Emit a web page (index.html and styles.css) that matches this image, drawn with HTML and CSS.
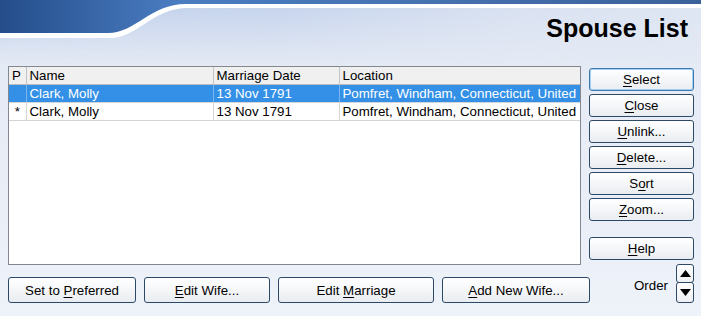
FILE: index.html
```html
<!DOCTYPE html>
<html lang="en">
<head>
  <meta charset="UTF-8">
  <title>Spouse List</title>
  <link rel="stylesheet" href="styles.css">
</head>
<body>
  <div class="dialog">
    <header class="banner">
      <svg class="banner-art" width="701" height="66" viewBox="0 0 701 66">
        <defs>
          <linearGradient id="dark" x1="0" y1="0" x2="1" y2="0">
            <stop offset="0" stop-color="#244d8a"/>
            <stop offset="0.25" stop-color="#4a7cc1"/>
            <stop offset="0.6" stop-color="#4672b0"/>
            <stop offset="1" stop-color="#3a6199"/>
          </linearGradient>
          <linearGradient id="glowV" x1="0" y1="0" x2="0" y2="1">
            <stop offset="0" stop-color="#bfcfeb" stop-opacity="1"/>
            <stop offset="1" stop-color="#c2d1ec" stop-opacity="0"/>
          </linearGradient>
          <linearGradient id="glowH" x1="0" y1="0" x2="1" y2="0">
            <stop offset="0" stop-color="#fff" stop-opacity="1"/>
            <stop offset="0.4" stop-color="#fff" stop-opacity="0.9"/>
            <stop offset="0.75" stop-color="#fff" stop-opacity="0.3"/>
            <stop offset="1" stop-color="#fff" stop-opacity="0.15"/>
          </linearGradient>
          <mask id="fade">
            <rect width="701" height="66" fill="url(#glowH)"/>
          </mask>
        </defs>
        <rect width="701" height="66" fill="url(#glowV)" mask="url(#fade)"/>
        <path d="M0 38 H110 C138 38 152 8 188 8 H701 V0 H0 Z" fill="#ffffff"/>
        <path d="M0 33 H108 C136 33 150 4 186 4 H701 V0 H0 Z" fill="url(#dark)"/>
      </svg>
      <h1>Spouse List</h1>
    </header>

    <div class="main">
      <div class="list">
        <table>
          <colgroup>
            <col class="col-p">
            <col class="col-name">
            <col class="col-date">
            <col>
          </colgroup>
          <thead>
            <tr><th>P</th><th>Name</th><th>Marriage Date</th><th>Location</th></tr>
          </thead>
          <tbody>
            <tr class="selected"><td></td><td>Clark, Molly</td><td>13 Nov 1791</td><td>Pomfret, Windham, Connecticut, United</td></tr>
            <tr><td>*</td><td>Clark, Molly</td><td>13 Nov 1791</td><td>Pomfret, Windham, Connecticut, United</td></tr>
          </tbody>
        </table>
      </div>

      <div class="side">
        <button class="btn default"><u>S</u>elect</button>
        <button class="btn"><u>C</u>lose</button>
        <button class="btn"><u>U</u>nlink...</button>
        <button class="btn"><u>D</u>elete...</button>
        <button class="btn">S<u>o</u>rt</button>
        <button class="btn"><u>Z</u>oom...</button>
        <button class="btn help"><u>H</u>elp</button>
      </div>
    </div>

    <div class="bottom">
      <button class="btn wide-1">Set to <u>P</u>referred</button>
      <button class="btn wide-2"><u>E</u>dit Wife...</button>
      <button class="btn wide-3">Edit <u>M</u>arriage</button>
      <button class="btn wide-4"><u>A</u>dd New Wife...</button>
      <div class="order">
        <span>Order</span>
        <div class="arrows">
          <button class="arrow">
            <svg width="11" height="7" viewBox="0 0 11 7"><path d="M0 7 L5.5 0 L11 7 Z" fill="#000"/></svg>
          </button>
          <button class="arrow">
            <svg width="11" height="7" viewBox="0 0 11 7"><path d="M0 0 L5.5 7 L11 0 Z" fill="#000"/></svg>
          </button>
        </div>
      </div>
    </div>
  </div>
</body>
</html>
```

FILE: styles.css
```css
html, body {
  margin: 0;
  padding: 0;
}

body {
  font-family: "Liberation Sans", Arial, sans-serif;
  font-size: 13px;
  color: #000;
  background: linear-gradient(180deg, #e3e9f4 0%, #e8edf6 50%, #eef2f9 100%);
  width: 701px;
  height: 316px;
  overflow: hidden;
}

.dialog {
  display: flex;
  flex-direction: column;
  height: 316px;
}

.banner {
  position: relative;
  height: 66px;
  display: flex;
  justify-content: flex-end;
  align-items: flex-start;
}

.banner-art {
  position: absolute;
  top: 0;
  left: 0;
}

h1 {
  position: relative;
  margin: 14px 13px 0 0;
  font-size: 25px;
  font-weight: bold;
  line-height: 28px;
  color: #000;
}

.main {
  display: flex;
  gap: 8px;
  padding: 0 7px 0 8px;
}

.list {
  width: 571px;
  height: 197px;
  background: #fff;
  border: 1px solid #828790;
  overflow: hidden;
}

table {
  width: 100%;
  table-layout: fixed;
  border-collapse: collapse;
  font-size: 13.3px;
}

.col-p { width: 17px; }
.col-name { width: 187px; }
.col-date { width: 126px; }

th, td {
  height: 17px;
  padding: 0 3px;
  white-space: nowrap;
  overflow: hidden;
  text-overflow: clip;
  text-align: left;
  font-weight: normal;
  line-height: 17px;
  border-right: 1px solid #d5d5d5;
  border-bottom: 1px solid #d5d5d5;
}

th {
  background: #f0f0f0;
  border-right-color: #c4c4c4;
  border-bottom-color: #bcbcbc;
}

th:last-child, td:last-child {
  border-right: none;
}

td:first-child {
  text-align: center;
  padding: 0;
}

tr.selected td {
  background: #3390e6;
  color: #fff;
  border-right-color: #7db6ee;
  border-bottom-color: #d5d5d5;
}

.side {
  width: 105px;
  display: flex;
  flex-direction: column;
  gap: 3px;
  padding-top: 2px;
}

.btn {
  font-family: "Liberation Sans", Arial, sans-serif;
  font-size: 13.3px;
  color: #000;
  height: 23px;
  padding: 0;
  border: 1px solid #2c4a68;
  border-radius: 3px;
  background: linear-gradient(180deg, #ffffff 0%, #f6f7f9 45%, #e9ecf0 100%);
  cursor: pointer;
}

.btn u {
  text-decoration-thickness: 1px;
  text-underline-offset: 2px;
}

.btn.default {
  border-color: #3b78b0;
  box-shadow: inset 0 0 0 1px #a8d0f0;
}

.btn.help {
  margin-top: 13px;
}

.bottom {
  display: flex;
  align-items: flex-start;
  gap: 8px;
  padding: 12px 7px 0 8px;
}

.bottom .btn {
  height: 26px;
}

.wide-1 { width: 128px; }
.wide-2 { width: 126px; }
.wide-3 { width: 156px; }
.wide-4 { width: 148px; }

.order {
  margin-left: auto;
  margin-top: -13px;
  display: flex;
  align-items: center;
  gap: 8px;
}

.order span {
  font-size: 13.3px;
  padding-top: 3px;
}

.arrows {
  display: flex;
  flex-direction: column;
}

.arrow {
  width: 18px;
  height: 19px;
  padding: 0;
  display: flex;
  justify-content: center;
  align-items: center;
  border: 1px solid #2c4a68;
  border-radius: 3px;
  background: linear-gradient(180deg, #ffffff 0%, #eef0f3 100%);
}

.arrow + .arrow {
  margin-top: -1px;
  height: 21px;
}
```
